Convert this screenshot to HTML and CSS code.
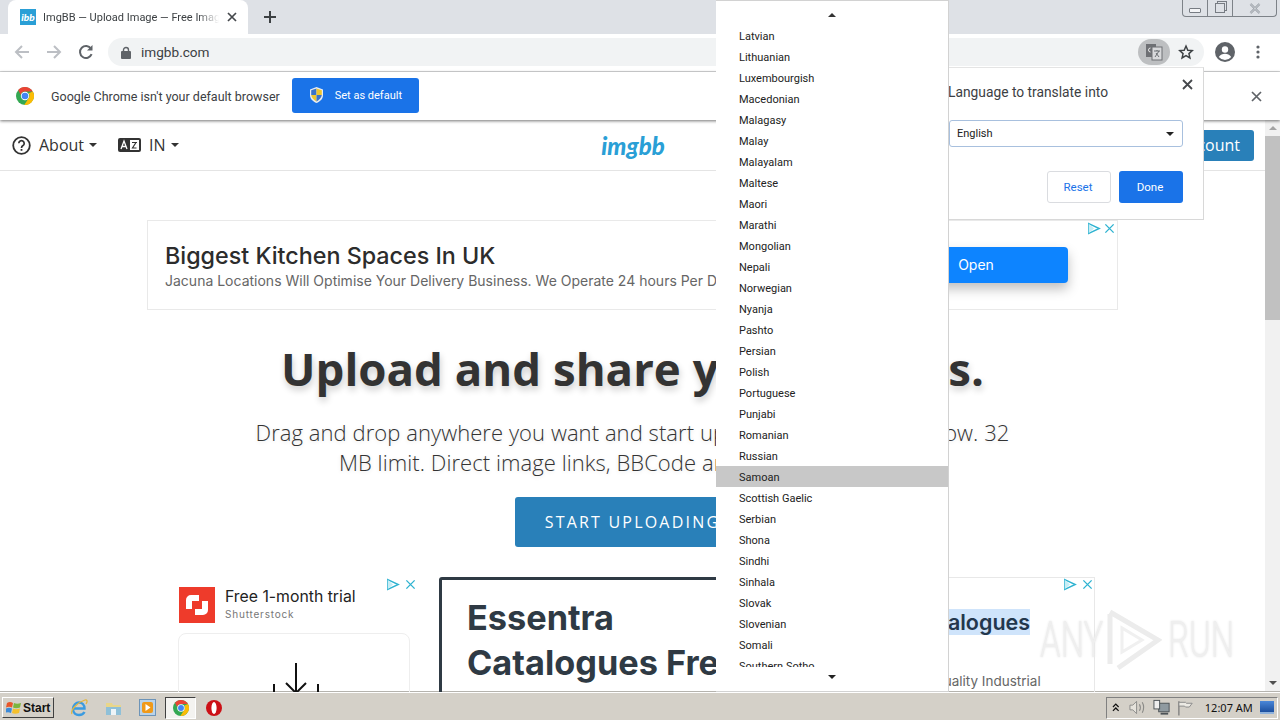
FILE: index.html
```html
<!DOCTYPE html>
<html lang="en">
<head>
    <meta charset="UTF-8">
    <title>ImgBB — Upload Image — Free Image Hosting</title>
    <link rel="stylesheet" href="styles.css">
</head>
<body>
<svg class="defs" width="0" height="0">
    <symbol id="chrome" viewBox="0 0 24 24">
        <circle cx="12" cy="12" r="12" fill="#34a853"/>
        <path d="M3 4A12 12 0 0 1 22.4 6H12a6 6 0 0 0-5.8 4.500z" fill="#ea4335"/>
        <path d="M22.4 6A12 12 0 0 1 11 24l5.600-8.600A6 6 0 0 0 17 8.400z" fill="#fbbc05"/>
        <circle cx="12" cy="12" r="5.600" fill="#fff"/>
        <circle cx="12" cy="12" r="4.400" fill="#4285f4"/>
    </symbol>
    <symbol id="adplay" viewBox="0 0 16 14">
        <path d="M2 1.500L14 7 2 12.500z" fill="none" stroke="#2fb3d1" stroke-width="1.600"/>
        <path d="M2 1.500L8 7 2 12.500z" fill="#c6edf5"/>
    </symbol>
    <symbol id="adclose" viewBox="0 0 12 12">
        <path d="M1.500 1.500l9 9M10.500 1.500l-9 9" stroke="#2fb3d1" stroke-width="1.500"/>
    </symbol>
</svg>

<div class="screen">
    <!-- browser tabs -->
    <div class="tabstrip">
        <div class="tab">
            <span class="favicon">ibb</span>
            <span class="tab-title">ImgBB — Upload Image — Free Image Hosting</span>
            <svg class="tab-close" width="10" height="10" viewBox="0 0 10 10"><path d="M1 1l8 8M9 1l-8 8" stroke="#45484c" stroke-width="1.700"/></svg>
        </div>
        <svg class="new-tab" width="14" height="14" viewBox="0 0 14 14"><path d="M7 1v12M1 7h12" stroke="#3c4043" stroke-width="2"/></svg>
        <div class="win-controls">
            <span class="win-btn win-min"><i></i></span>
            <span class="win-btn win-max"><i></i></span>
            <span class="win-btn win-close">
                <svg width="12" height="11" viewBox="0 0 12 11"><path d="M1.500 1l9 9M10.500 1l-9 9" stroke="#8d939b" stroke-width="2.200"/><path d="M1.500 1l9 9M10.500 1l-9 9" stroke="#eef0f2" stroke-width=".8"/></svg>
            </span>
        </div>
    </div>

    <!-- address bar -->
    <div class="toolbar">
        <svg class="nav-icon" width="16" height="16" viewBox="0 0 16 16"><path d="M15 8H2M8 2L2 8l6 6" fill="none" stroke="#bcbfc4" stroke-width="2"/></svg>
        <svg class="nav-icon" width="16" height="16" viewBox="0 0 16 16"><path d="M1 8h13M8 2l6 6-6 6" fill="none" stroke="#bcbfc4" stroke-width="2"/></svg>
        <svg class="nav-icon" width="16" height="16" viewBox="0 0 16 16"><path d="M13.600 10.200A6 6 0 1 1 13 4.600" fill="none" stroke="#5f6368" stroke-width="2"/><path d="M14.500 1v5.600H9z" fill="#5f6368"/></svg>
        <div class="omnibox">
            <svg width="10" height="13" viewBox="0 0 10 13"><path d="M2.500 6V4a2.500 2.500 0 0 1 5 0v2" fill="none" stroke="#5f6368" stroke-width="1.400"/><rect y="5" width="10" height="8" rx="1" fill="#5f6368"/></svg>
            <span class="url">imgbb.com</span>
            <span class="translate-chip">
                <svg width="18" height="18" viewBox="0 0 18 18"><rect x="1" y="1" width="10" height="13" fill="#6e7074"/><rect x="7" y="4" width="10" height="13" fill="#d8d9db" stroke="#6e7074"/><path d="M5.500 5a2 2 0 1 0 0 4" fill="none" stroke="#e8e8e8"/><path d="M9 8h6M12 7v1M10 14l4-6M11 10l3 4" fill="none" stroke="#5f6368" stroke-width=".9"/></svg>
            </span>
            <svg class="star" width="16" height="16" viewBox="0 0 24 24"><path d="M12 3l2.700 6.300 6.800.6-5.100 4.500 1.500 6.600L12 17.500 6.100 21l1.500-6.600L2.500 9.900l6.800-.6z" fill="none" stroke="#3c4043" stroke-width="2.200"/></svg>
        </div>
        <svg class="avatar" width="20" height="20" viewBox="0 0 20 20"><circle cx="10" cy="10" r="10" fill="#5f6368"/><circle cx="10" cy="7.500" r="3.200" fill="#fff"/><path d="M3.800 15c1.500-2.300 3.800-3.200 6.200-3.200s4.700.9 6.200 3.200a8 8 0 0 1-12.400 0z" fill="#fff"/></svg>
        <svg class="dots" width="4" height="14" viewBox="0 0 4 14"><circle cx="2" cy="2" r="1.600" fill="#5f6368"/><circle cx="2" cy="7" r="1.600" fill="#5f6368"/><circle cx="2" cy="12" r="1.600" fill="#5f6368"/></svg>
    </div>

    <!-- default browser prompt -->
    <div class="infobar">
        <svg class="info-logo" width="18" height="18"><use href="#chrome"/></svg>
        <span class="info-text">Google Chrome isn't your default browser</span>
        <button class="default-btn">
            <svg width="15" height="16" viewBox="0 0 15 16"><path d="M7.500 0L14 2.500V8c0 4-3 6.500-6.500 8C4 14.500 1 12 1 8V2.500z" fill="#e8ecf2"/><path d="M7.500 1.500V8H2.200V3.300z" fill="#3a74c9"/><path d="M7.500 1.500V8h5.300V3.300z" fill="#efc62c"/><path d="M7.500 8v6.400C5 13.200 2.500 11 2.200 8z" fill="#efc62c"/><path d="M7.500 8v6.400c2.500-1.200 5-3.400 5.300-6.400z" fill="#3a74c9"/></svg>
            <span>Set as default</span>
        </button>
        <svg class="info-close" width="11" height="11" viewBox="0 0 11 11"><path d="M1 1l9 9M10 1l-9 9" stroke="#5f6368" stroke-width="1.700"/></svg>
    </div>

    <div class="viewport">
        <main class="site">
            <nav class="site-nav">
                <div class="nav-left">
                    <a class="nav-item">
                        <svg width="19" height="19" viewBox="0 0 19 19"><circle cx="9.500" cy="9.500" r="8.300" fill="none" stroke="#333" stroke-width="1.800"/><path d="M6.800 7.300a2.700 2.700 0 1 1 4.200 2.300c-1 .6-1.500 1.100-1.500 2.300" fill="none" stroke="#333" stroke-width="1.700"/><rect x="8.600" y="13" width="1.800" height="1.800" fill="#333"/></svg>
                        <span>About</span><i class="caret"></i>
                    </a>
                    <a class="nav-item">
                        <svg width="23" height="14" viewBox="0 0 23 14"><rect width="23" height="14" rx="2" fill="#333"/><path d="M3 11L6 3l3 8M4 8.500h4" fill="none" stroke="#fff" stroke-width="1.300"/><rect x="12" y="2" width="9" height="10" fill="#fff"/><path d="M14 4.500h5M18 4.500L14.500 10h4" fill="none" stroke="#333" stroke-width="1.200"/></svg>
                        <span>IN</span><i class="caret"></i>
                    </a>
                </div>
                <span class="logo">imgbb</span>
                <div class="nav-right">
                    <a class="account-btn">Create account</a>
                </div>
            </nav>

            <div class="banner-ad">
                <div class="banner-copy">
                    <div class="banner-title">Biggest Kitchen Spaces In UK</div>
                    <div class="banner-text">Jacuna Locations Will Optimise Your Delivery Business. We Operate 24 hours Per Day</div>
                </div>
                <a class="banner-open">Open</a>
                <span class="ad-marks">
                    <svg width="14" height="13"><use href="#adplay"/></svg>
                    <svg width="11" height="11"><use href="#adclose"/></svg>
                </span>
            </div>

            <section class="hero">
                <h1>Upload and share your images.</h1>
                <p>Drag and drop anywhere you want and start uploading your images now. 32 MB limit. Direct image links, BBCode and HTML thumbnails.</p>
                <a class="start-btn">START UPLOADING</a>
            </section>

            <div class="ad-row">
                <div class="stock-ad">
                    <div class="stock-head">
                        <span class="stock-logo">
                            <svg width="36" height="36" viewBox="0 0 36 36"><path d="M20 8h-8a5 5 0 0 0-5 5v9h6v-8h7zM16 28h8a5 5 0 0 0 5-5v-9h-6v8h-7z" fill="#fff"/></svg>
                        </span>
                        <div>
                            <div class="stock-title">Free 1-month trial</div>
                            <div class="stock-name">Shutterstock</div>
                        </div>
                    </div>
                    <div class="stock-card">
                        <svg width="50" height="32" viewBox="0 0 50 32"><path d="M25 1v29M15 21l10 10 10-10" fill="none" stroke="#111" stroke-width="2"/><path d="M3 22v10M47 22v10" stroke="#111" stroke-width="2"/></svg>
                    </div>
                    <span class="ad-marks">
                        <svg width="14" height="13"><use href="#adplay"/></svg>
                        <svg width="11" height="11"><use href="#adclose"/></svg>
                    </span>
                </div>
                <div class="essentra-ad">
                    <div class="essentra-main">Essentra<br>Catalogues Free</div>
                    <div class="essentra-side">
                        <div class="essentra-name"><mark>Catalogues</mark></div>
                        <div class="essentra-text">High Quality Industrial</div>
                    </div>
                    <span class="ad-marks">
                        <svg width="14" height="13"><use href="#adplay"/></svg>
                        <svg width="11" height="11"><use href="#adclose"/></svg>
                    </span>
                </div>
            </div>
        </main>

        <div class="scrollbar">
            <i class="arrow-up"></i>
            <div class="scroll-track"><div class="scroll-thumb"></div></div>
            <i class="arrow-down"></i>
        </div>
    </div>

    <!-- windows taskbar -->
    <div class="taskbar">
        <button class="start">
            <svg width="16" height="15" viewBox="0 0 16 15"><path d="M1 3q3-2 6 0L6 7.500q-3-1.500-6 0z" fill="#e8562a"/><path d="M8 3q3 1.500 7 0l-1 4.500q-4 1.500-7 0z" fill="#7cb53c"/><path d="M0 8.500q3-1.500 6 0L5 13q-3-1.500-6 0z" fill="#3b8ad9"/><path d="M7 8.500q3 1.500 7 0L13 13q-4 1.500-7 0z" fill="#f5c02c"/></svg>
            <span>Start</span>
        </button>
        <div class="quick">
            <span class="task">
                <svg width="18" height="18" viewBox="0 0 18 18"><path d="M3.500 9.500h11c0-4-2.500-6-5.500-6S3 6 3 10s3 6 6 6c2.500 0 4.500-1 5.500-3" fill="none" stroke="#3b9be0" stroke-width="2.400"/><path d="M2 15C0 11 8 3 15 1c2-.5 3 1 1 4" fill="none" stroke="#e5b53a" stroke-width="1.200"/></svg>
            </span>
            <span class="task">
                <svg width="17" height="17" viewBox="0 0 17 17"><path d="M1 4h6l1 2h8v10H1z" fill="#e9d68a"/><rect x="1" y="8" width="15" height="8" fill="#8fc0d8"/><rect x="6" y="10" width="5" height="6" fill="#eef4f7"/></svg>
            </span>
            <span class="task">
                <svg width="17" height="17" viewBox="0 0 17 17"><rect x=".5" y=".5" width="16" height="16" fill="#b9d3ea" stroke="#6d94b8"/><rect x="3" y="3" width="11" height="11" rx="2" fill="#f09a1a"/><path d="M6.500 5v7l5-3.500z" fill="#fff"/></svg>
            </span>
            <span class="task task-active"><svg width="16" height="16"><use href="#chrome"/></svg></span>
            <span class="task">
                <svg width="16" height="16" viewBox="0 0 16 16"><circle cx="8" cy="8" r="8" fill="#cc1016"/><ellipse cx="8" cy="8" rx="2.600" ry="6" fill="#fff"/></svg>
            </span>
        </div>
        <div class="tray">
            <svg width="8" height="9" viewBox="0 0 8 9"><path d="M1 4l3-3 3 3M1 8l3-3 3 3" fill="none" stroke="#111" stroke-width="1.300"/></svg>
            <svg class="tray-sound" width="18" height="15" viewBox="0 0 18 15"><path d="M1 5h3l4-4v13l-4-4H1z" fill="#e6e3dc" stroke="#8b8b88"/><path d="M11 4q2 3.500 0 7M14 2q3 5.500 0 11" fill="none" stroke="#8b8b88" stroke-width="1.200"/></svg>
            <svg width="18" height="17" viewBox="0 0 18 17"><rect x="6" y="4" width="11" height="9" fill="#8f9aa0" stroke="#4d5357"/><rect x="1" y="1" width="6" height="9" fill="#eee" stroke="#4d5357"/><path d="M8 15h8" stroke="#4d5357" stroke-width="2"/></svg>
            <svg width="17" height="16" viewBox="0 0 17 16"><path d="M2 1v15" stroke="#777" stroke-width="1.300"/><path d="M2 2h7l1 1h6l-3 4H9L8 6H2z" fill="#eceae4" stroke="#888"/></svg>
            <span class="clock">12:07 AM</span>
            <span class="show-desktop"></span>
        </div>
    </div>

    <!-- language list popup -->
    <div class="lang-popup">
        <div class="lang-arrow"><i class="tri-up"></i></div>
        <ul class="lang-list">
            <li>Latvian</li>
            <li>Lithuanian</li>
            <li>Luxembourgish</li>
            <li>Macedonian</li>
            <li>Malagasy</li>
            <li>Malay</li>
            <li>Malayalam</li>
            <li>Maltese</li>
            <li>Maori</li>
            <li>Marathi</li>
            <li>Mongolian</li>
            <li>Nepali</li>
            <li>Norwegian</li>
            <li>Nyanja</li>
            <li>Pashto</li>
            <li>Persian</li>
            <li>Polish</li>
            <li>Portuguese</li>
            <li>Punjabi</li>
            <li>Romanian</li>
            <li>Russian</li>
            <li class="selected">Samoan</li>
            <li>Scottish Gaelic</li>
            <li>Serbian</li>
            <li>Shona</li>
            <li>Sindhi</li>
            <li>Sinhala</li>
            <li>Slovak</li>
            <li>Slovenian</li>
            <li>Somali</li>
            <li>Southern Sotho</li>
        </ul>
        <div class="lang-arrow lang-arrow-down"><i class="tri-down"></i></div>
    </div>

    <!-- translate bubble -->
    <div class="bubble">
        <svg class="bubble-close" width="11" height="11" viewBox="0 0 11 11"><path d="M1 1l9 9M10 1l-9 9" stroke="#45484c" stroke-width="1.800"/></svg>
        <div class="bubble-title">Language to translate into</div>
        <div class="bubble-select"><span>English</span><i class="tri-down"></i></div>
        <div class="bubble-actions">
            <button class="btn-reset">Reset</button>
            <button class="btn-done">Done</button>
        </div>
    </div>

    <div class="watermark">
        <span>ANY</span>
        <svg width="56" height="64" viewBox="0 0 56 64"><path d="M4 6v50M4 4l48 28L12 60" fill="none" stroke="#ececec" stroke-width="5"/><path d="M16 20v24l20-12z" fill="none" stroke="#f0f0f0" stroke-width="3"/></svg>
        <span>RUN</span>
    </div>
</div>
</body>
</html>
```

FILE: styles.css
```css
* {
    box-sizing: border-box;
}

body {
    margin: 0;
    background-color: #fff;
    font-family: "Open Sans", Arial, sans-serif;
    color: #333;
}

.defs {
    position: absolute;
}

button {
    border: none;
    font-family: inherit;
    padding: 0;
}

.screen {
    position: relative;
    display: flex;
    flex-direction: column;
    width: 1280px;
    height: 720px;
    overflow: hidden;
}

/* tabs */
.tabstrip {
    display: flex;
    align-items: center;
    height: 34px;
    padding-left: 8px;
    background-color: #dee1e6;
}

.tab {
    display: flex;
    align-items: center;
    width: 240px;
    height: 34px;
    padding: 0 11px 0 12px;
    background-color: #fff;
    border-radius: 8px 8px 0 0;
}

.favicon {
    flex: none;
    width: 16px;
    height: 16px;
    background-color: #2a9fd6;
    color: #fff;
    font-family: "Lato", sans-serif;
    font-size: 10px;
    font-style: italic;
    font-weight: 900;
    line-height: 16px;
    text-align: center;
}

.tab-title {
    flex: 1;
    margin: 0 8px 0 7px;
    overflow: hidden;
    white-space: nowrap;
    font-family: "Roboto", sans-serif;
    font-size: 11px;
    color: #3c4043;
    -webkit-mask-image: linear-gradient(to right, #000 88%, transparent);
    mask-image: linear-gradient(to right, #000 88%, transparent);
}

.tab-close {
    flex: none;
}

.new-tab {
    margin-left: 15px;
}

.win-controls {
    display: flex;
    align-self: flex-start;
    height: 17px;
    margin-left: auto;
    margin-right: 3px;
    border: 1px solid #7d8288;
    border-top: none;
    border-radius: 0 0 4px 4px;
}

.win-btn {
    display: flex;
    align-items: center;
    justify-content: center;
    height: 16px;
}

.win-min {
    width: 25px;
    border-right: 1px solid #7d8288;
}

.win-min i {
    width: 12px;
    height: 5px;
    margin-top: 4px;
    background-color: #f3f4f6;
    border: 1px solid #777c83;
    border-radius: 1px;
}

.win-max {
    width: 25px;
    border-right: 1px solid #7d8288;
}

.win-max i {
    width: 10px;
    height: 10px;
    border: 1px solid #777c83;
    box-shadow: 2px -2px 0 -1px #dee1e6, 2px -2px 0 0 #777c83;
}

.win-close {
    width: 43px;
}

/* address bar */
.toolbar {
    display: flex;
    align-items: center;
    height: 38px;
    padding: 0 0 1px 14px;
    background-color: #fff;
    border-bottom: 1px solid #d8d9da;
}

.nav-icon {
    margin-right: 16px;
}

.omnibox {
    display: flex;
    align-items: center;
    width: 1096px;
    height: 28px;
    margin-left: -2px;
    padding: 0 10px 0 13px;
    background-color: #f1f3f4;
    border-radius: 14px;
}

.url {
    flex: 1;
    margin-left: 10px;
    font-family: "Roboto", sans-serif;
    font-size: 13.6px;
    color: #3c4043;
}

.translate-chip {
    display: flex;
    align-items: center;
    justify-content: center;
    width: 32px;
    height: 26px;
    margin-right: 8px;
    background-color: #bdbfc1;
    border-radius: 13px;
}

.avatar {
    margin-left: 11px;
}

.dots {
    margin-left: 21px;
}

/* infobar */
.infobar {
    position: relative;
    z-index: 1;
    display: flex;
    align-items: center;
    height: 48px;
    padding: 0 18px 0 16px;
    background-color: #fff;
    box-shadow: 0 1px 3px rgba(0, 0, 0, 0.55);
}

.info-text {
    margin: 0 12px 0 17px;
    font-family: "Roboto", sans-serif;
    font-size: 12.5px;
    color: #3c4043;
}

.default-btn {
    display: flex;
    align-items: center;
    gap: 11px;
    width: 127px;
    height: 35px;
    margin-bottom: 2px;
    padding-left: 17px;
    background-color: #1a73e8;
    border-radius: 3px;
    color: #fff;
    font-family: "Roboto", sans-serif;
    font-size: 11px;
}

.info-close {
    margin-left: auto;
}

/* page */
.viewport {
    flex: 1;
    display: flex;
    min-height: 0;
}

.site {
    flex: 1;
    min-width: 0;
    overflow: hidden;
}

.site-nav {
    display: grid;
    grid-template-columns: 1fr auto 1fr;
    align-items: center;
    height: 51px;
    padding: 0 11px 0 12px;
    border-bottom: 1px solid #e4e4e4;
}

.nav-left {
    display: flex;
    gap: 21px;
}

.nav-item {
    display: flex;
    align-items: center;
    gap: 8px;
    font-size: 16px;
    color: #333;
}

.caret {
    width: 0;
    height: 0;
    margin-left: -3px;
    border-left: 4px solid transparent;
    border-right: 4px solid transparent;
    border-top: 4px solid #333;
}

.logo {
    font-family: "Lato", sans-serif;
    font-size: 24px;
    font-style: italic;
    font-weight: 900;
    color: #2a9fd6;
}

.nav-right {
    display: flex;
    justify-content: flex-end;
}

.account-btn {
    height: 31px;
    padding: 0 14px;
    background-color: #2980b9;
    border-radius: 3px;
    color: #fff;
    font-size: 16px;
    line-height: 31px;
}

.banner-ad {
    position: relative;
    display: flex;
    align-items: center;
    width: 971px;
    height: 90px;
    margin: 49px auto 0;
    padding-left: 17px;
    border: 1px solid #e9e9e9;
}

.banner-copy {
    flex: 1;
    min-width: 0;
}

.banner-title {
    padding-top: 1px;
    font-family: "Inter", sans-serif;
    font-size: 23.3px;
    font-weight: 500;
    line-height: 28px;
    color: #2c2c2c;
}

.banner-text {
    margin-top: 2px;
    font-family: "Inter", sans-serif;
    font-size: 14px;
    line-height: 18px;
    color: #666;
    white-space: nowrap;
}

.banner-open {
    flex: none;
    width: 184px;
    height: 36px;
    margin-right: 49px;
    background-color: #0d84ff;
    border-radius: 4px;
    box-shadow: 0 6px 12px rgba(0, 0, 0, 0.25);
    color: #fff;
    font-family: "Inter", sans-serif;
    font-size: 14px;
    line-height: 36px;
    text-align: center;
}

.ad-marks {
    position: absolute;
    top: 1px;
    right: 2px;
    display: flex;
    align-items: center;
    gap: 3px;
}

.stock-ad .ad-marks,
.essentra-ad .ad-marks {
    gap: 5px;
}

.stock-ad .ad-marks {
    right: 0;
}

.essentra-ad .ad-marks {
    right: 2px;
}

.hero {
    display: flex;
    flex-direction: column;
    align-items: center;
    text-align: center;
}

.hero h1 {
    margin: 26px 0 0;
    font-size: 45.6px;
    font-weight: 700;
    line-height: 64px;
    color: #333;
    text-shadow: 1px 4px 7px rgba(0, 0, 0, 0.2);
}

.hero p {
    width: 780px;
    margin: 17px 0 0;
    font-size: 22px;
    font-weight: 300;
    letter-spacing: 0.07px;
    line-height: 30px;
    color: #333;
    text-shadow: 0 1px 4px rgba(0, 0, 0, 0.12);
}

.start-btn {
    width: 236px;
    height: 50px;
    margin-top: 20px;
    background-color: #2980b9;
    border-radius: 3px;
    color: #fff;
    font-size: 16px;
    letter-spacing: 2.2px;
    line-height: 50px;
}

.ad-row {
    display: flex;
    gap: 23px;
    margin: 30px 0 0 178px;
}

.stock-ad {
    position: relative;
    flex: none;
    width: 238px;
    height: 130px;
}

.stock-head {
    display: flex;
    align-items: center;
    gap: 10px;
    margin: 10px 0 10px 1px;
}

.stock-logo {
    display: flex;
    align-items: center;
    justify-content: center;
    width: 36px;
    height: 36px;
    background-color: #ee3b2b;
}

.stock-title {
    font-family: "Inter", sans-serif;
    font-size: 15.8px;
    line-height: 20px;
    margin-top: -2px;
    color: #222;
}

.stock-name {
    font-family: "Inter", sans-serif;
    font-size: 10px;
    letter-spacing: 0.8px;
    line-height: 14px;
    color: #777;
}

.stock-card {
    display: flex;
    justify-content: center;
    width: 232px;
    height: 100px;
    padding: 28px 0 0 4px;
    border: 1px solid #eee;
    border-radius: 8px;
}

.essentra-ad {
    position: relative;
    display: flex;
    flex: none;
    width: 656px;
    height: 130px;
}

.essentra-main {
    flex: none;
    width: 320px;
    padding: 15px 0 0 25px;
    border: 3px solid #2f3a44;
    border-radius: 3px 0 0 0;
    font-family: "Inter", sans-serif;
    font-size: 34.3px;
    font-weight: 700;
    line-height: 45px;
    color: #2f3a44;
    white-space: nowrap;
}

.essentra-side {
    flex: 1;
    padding: 32px 0 0 153px;
    border: 1px solid #e8e8e8;
    border-left: none;
    white-space: nowrap;
}

.essentra-name {
    font-family: "Inter", sans-serif;
    font-size: 21.5px;
    font-weight: 600;
    line-height: 24px;
    color: #23374d;
}

.essentra-name mark {
    background-color: #cfe4fb;
    color: inherit;
}

.essentra-text {
    margin: 38px 0 0 -12px;
    font-family: "Inter", sans-serif;
    font-size: 13.5px;
    line-height: 18px;
    color: #666;
}

.scrollbar {
    flex: none;
    display: flex;
    flex-direction: column;
    align-items: center;
    width: 15px;
    padding: 6px 0 7px;
    background-color: #f1f1f1;
}

.arrow-up {
    width: 0;
    height: 0;
    border-left: 4px solid transparent;
    border-right: 4px solid transparent;
    border-bottom: 4px solid #a3a3a3;
}

.arrow-down {
    width: 0;
    height: 0;
    border-left: 4px solid transparent;
    border-right: 4px solid transparent;
    border-top: 4px solid #505050;
}

.scroll-track {
    flex: 1;
    width: 100%;
    padding-top: 6px;
}

.scroll-thumb {
    height: 184px;
    background-color: #c1c1c1;
}

/* taskbar */
.taskbar {
    display: flex;
    align-items: center;
    height: 28px;
    padding: 2px 2px 0;
    background-color: #d4d0c8;
    border-top: 1px solid #fff;
    box-shadow: 0 -1px 0 #b5b3ae;
}

.start {
    display: flex;
    align-items: center;
    gap: 1px;
    width: 52px;
    height: 21px;
    padding-left: 3px;
    background-color: #d4d0c8;
    border: 1px solid;
    border-color: #fff #404040 #404040 #fff;
    font-family: "Liberation Sans", Arial, sans-serif;
    font-size: 12px;
    font-weight: 700;
    color: #111;
}

.quick {
    display: flex;
    align-items: center;
    margin-left: 8px;
}

.task {
    display: flex;
    align-items: center;
    justify-content: center;
    width: 34px;
    height: 22px;
}

.task-active {
    width: 31px;
    margin: 0 1px;
    background-color: #f4f3f0;
    border: 1px solid;
    border-color: #404040 #fff #fff #404040;
}

.tray {
    display: flex;
    align-items: center;
    gap: 7px;
    width: 172px;
    height: 22px;
    margin-left: auto;
    padding: 0 3px 0 5px;
    border: 1px solid;
    border-color: #808080 #fff #fff #808080;
}

.tray-sound {
    margin-left: 2px;
}

.clock {
    margin-left: 5px;
    font-family: "Noto Sans", sans-serif;
    font-size: 11px;
    white-space: nowrap;
    color: #111;
}

.show-desktop {
    width: 15px;
    height: 13px;
    margin-left: auto;
    background: linear-gradient(#4a87d8, #1c4f9e);
    border-bottom: 2px solid #8fb2dc;
}

/* language popup */
.lang-popup {
    position: absolute;
    top: 0;
    left: 716px;
    z-index: 3;
    display: flex;
    flex-direction: column;
    width: 233px;
    height: 692px;
    background-color: #fff;
    border: 1px solid #d2d2d2;
    border-left: none;
}

.lang-arrow {
    display: flex;
    align-items: center;
    justify-content: center;
    flex: none;
    height: 24px;
    padding-top: 4px;
}

.lang-arrow-down {
    height: 24px;
    padding: 0 0 4px;
}

.tri-up {
    width: 0;
    height: 0;
    border-left: 4px solid transparent;
    border-right: 4px solid transparent;
    border-bottom: 4px solid #333;
}

.tri-down {
    width: 0;
    height: 0;
    border-left: 4px solid transparent;
    border-right: 4px solid transparent;
    border-top: 4px solid #222;
}

.lang-list {
    flex: 1;
    min-height: 0;
    margin: 0;
    padding: 0;
    overflow: hidden;
    list-style: none;
}

.lang-list li {
    height: 21px;
    padding-left: 23px;
    font-family: "Roboto", sans-serif;
    font-size: 11px;
    line-height: 23px;
    color: #222;
}

.lang-list .selected {
    background-color: #c8c8c8;
}

/* translate bubble */
.bubble {
    position: absolute;
    top: 67px;
    left: 932px;
    z-index: 2;
    width: 272px;
    height: 153px;
    padding: 15px 20px 0 16px;
    background-color: #fff;
    border: 1px solid #d8d8d8;
    border-top-color: #e4e4e4;
    font-family: "Roboto", sans-serif;
}

.bubble-close {
    position: absolute;
    top: 11px;
    right: 10px;
}

.bubble-title {
    height: 18px;
    margin-left: -1px;
    font-size: 13.8px;
    line-height: 18px;
    color: #3c4043;
    white-space: nowrap;
}

.bubble-select {
    display: flex;
    align-items: center;
    justify-content: space-between;
    height: 27px;
    margin-top: 19px;
    padding: 0 8px 0 7px;
    border: 1px solid #a8c0de;
    border-radius: 3px;
    font-family: "Roboto", sans-serif;
    font-size: 11px;
    color: #222;
}

.bubble-actions {
    display: flex;
    justify-content: flex-end;
    gap: 8px;
    margin-top: 24px;
}

.bubble-actions button {
    width: 64px;
    height: 32px;
    padding-right: 2px;
    border-radius: 3px;
    font-family: "Roboto", sans-serif;
    font-size: 11.5px;
}

.btn-reset {
    background-color: #fff;
    border: 1px solid #dadce0;
    color: #1a73e8;
}

.btn-done {
    background-color: #1a73e8;
    color: #fff;
}

.watermark {
    position: absolute;
    top: 608px;
    left: 1040px;
    z-index: 4;
    display: flex;
    align-items: center;
    gap: 6px;
    font-family: "Roboto", sans-serif;
    font-size: 50px;
    font-weight: 300;
    color: #efefef;
    text-shadow: 0 0 3px #e2e2e2;
}

.watermark span {
    width: 60px;
    transform: scaleX(0.66);
    transform-origin: left center;
}
```
